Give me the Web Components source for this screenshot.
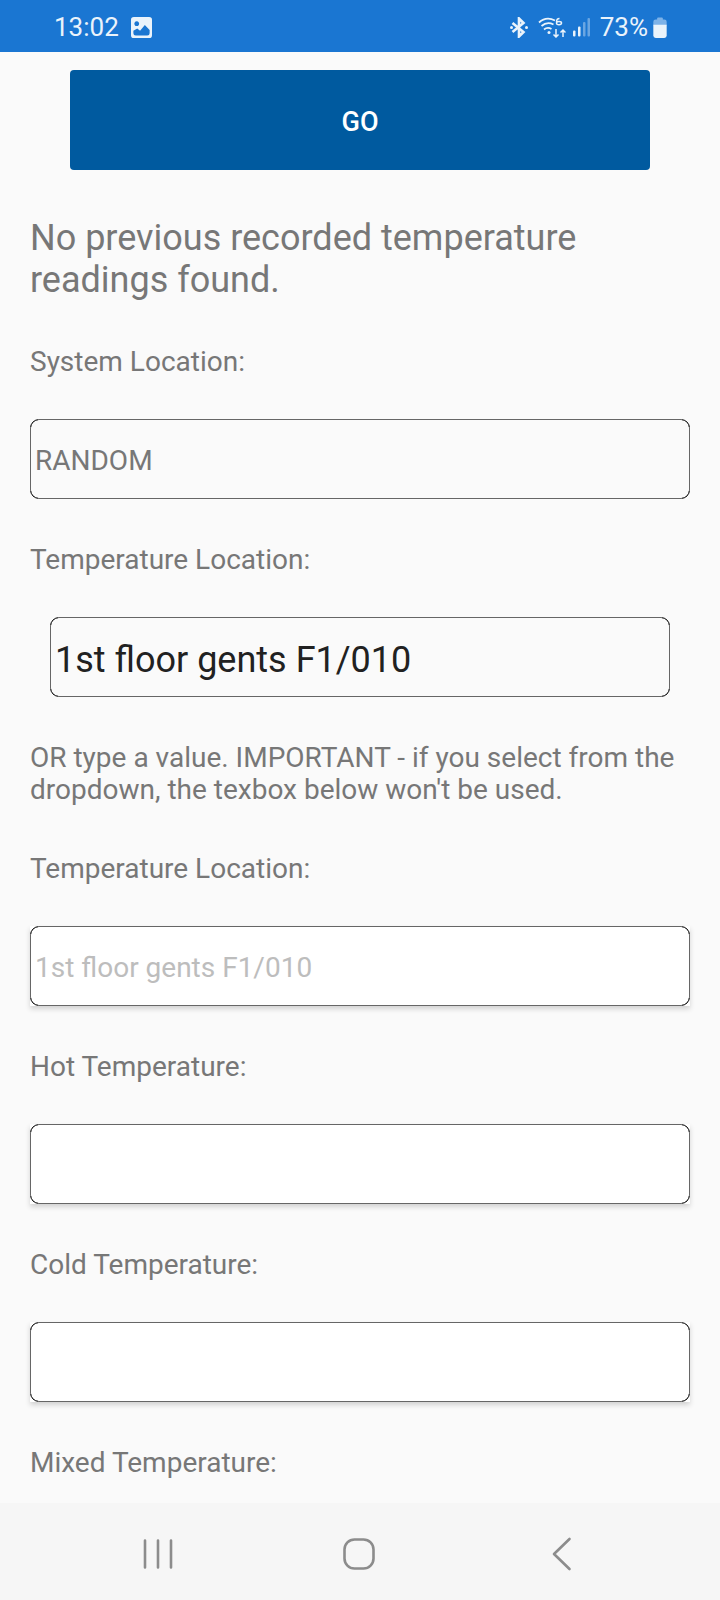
<!DOCTYPE html>
<html lang="en">
<head>
<meta charset="UTF-8">
<title>Temperature readings</title>
<style>
    html, body { margin: 0; padding: 0; }
    body {
        width: 720px;
        height: 1600px;
        overflow: hidden;
        background: #fafafa;
        font-family: Roboto, "Liberation Sans", sans-serif;
        display: flex;
        flex-direction: column;
    }
    page-content { flex: 1; min-height: 0; }
</style>
</head>
<body>
<template id="status-bar">
    <style>
        :host {
            display: flex;
            align-items: center;
            height: 52px;
            flex: none;
            padding: 0 53px 0 54px;
            background: #1a76d2;
            color: #eaf3fb;
            font-size: 26px;
            box-sizing: border-box;
        }
        .time { margin-right: 12px; position: relative; top: 1px; }
        svg { display: block; position: relative; top: 1px; }
        .grow { flex: 1; }
        .pct { margin: 0 5px 0 10px; position: relative; top: 1px; }
    </style>
    <span class="time">13:02</span>
    <svg width="21" height="21" viewBox="0 0 22 22">
        <path fill="#eaf3fb" fill-rule="evenodd" d="M3 0h16a3 3 0 0 1 3 3v16a3 3 0 0 1-3 3H3a3 3 0 0 1-3-3V3a3 3 0 0 1 3-3zM6 4.500a2.500 2.500 0 1 0 .01 0zM2.500 14.500v2.500a2.500 2.500 0 0 0 2.500 2.500h12a2.500 2.500 0 0 0 2.500-2.500v-3.500l-5-5-5 6-3-2.500z"/>
    </svg>
    <span class="grow"></span>
    <svg width="18" height="21" viewBox="0 0 18 21" fill="none" stroke="#eaf3fb" stroke-width="2.600">
        <path d="M2.500 6l11 9-4.500 4.500V1.500l4.500 4.500-11 9"/>
        <circle cx="1.500" cy="10.500" r="1.500" fill="#eaf3fb" stroke="none"/>
        <circle cx="16.500" cy="10.500" r="1.500" fill="#eaf3fb" stroke="none"/>
    </svg>
    <svg style="margin-left:10px" width="28" height="21" viewBox="0 0 28 21" fill="none" stroke="#eaf3fb" stroke-width="1.800">
        <path d="M1 5.500c5-4.500 11-4.500 16-2M3.500 9c3.500-3 8-3.500 12-1.500M6 12.500c2.500-2 5-2 7.500-.5"/>
        <circle cx="11" cy="15.500" r="1.500" fill="#eaf3fb" stroke="none"/>
        <path stroke-width="1.500" d="M18.500 5c0-2 1-3.500 3-3.500M18.500 6c0-2 5-2 5 0s-5 2.500-5 0zM18 12v8M15.500 17.500l2.500 2.500 2.500-2.500M25 20v-6.500M22.500 15.500l2.500-2.500 2.500 2.500"/>
    </svg>
    <svg style="margin-left:7px" width="17" height="20" viewBox="0 0 17 20">
        <rect x="0" y="13.500" width="2.500" height="6" rx="1" fill="#eaf3fb"/>
        <rect x="5" y="9.500" width="2.500" height="10" rx="1" fill="#eaf3fb"/>
        <rect x="10" y="5" width="2.500" height="14.500" rx="1" fill="#6aa6e2"/>
        <rect x="14.500" y="1" width="2.500" height="18.500" rx="1" fill="#6aa6e2"/>
    </svg>
    <span class="pct">73%</span>
    <svg width="14" height="21" viewBox="0 0 14 22">
        <path fill="#7db2e8" d="M4 1.500a1 1 0 0 1 1-1h4a1 1 0 0 1 1 1V2.500h1.500A2.500 2.500 0 0 1 14 5v4H0V5a2.500 2.500 0 0 1 2.500-2.500H4z"/>
        <path fill="#eaf3fb" d="M0 8h14v11.500a2.500 2.500 0 0 1-2.500 2.500h-9A2.500 2.500 0 0 1 0 19.500z"/>
    </svg>
</template>

<template id="go-button">
    <style>
        :host { display: block; padding: 18px 70px 0; }
        .btn {
            height: 100px;
            border-radius: 4px;
            background: #005a9f;
            color: #fff;
            display: flex;
            align-items: center;
            justify-content: center;
            font-size: 27px;
            font-weight: 500;
            padding-top: 3px;
            box-sizing: border-box;
        }
    </style>
    <div class="btn"><slot></slot></div>
</template>

<template id="page-content">
    <style>
        :host { display: block; overflow: hidden; }
        .message {
            margin: 47px 30px 0;
            font-size: 36px;
            line-height: 42px;
            color: #777;
        }
        .hint {
            margin: 45px 30px 0;
            font-size: 28px;
            line-height: 32px;
            color: #777;
        }
    </style>
    <go-button>GO</go-button>
    <p class="message">No previous recorded temperature readings found.</p>
    <form-field label="System Location:" style="--label-gap:46px">
        <text-box value="RANDOM"></text-box>
    </form-field>
    <form-field label="Temperature Location:">
        <text-box kind="picker" value="1st floor gents F1/010"></text-box>
    </form-field>
    <p class="hint">OR type a value. IMPORTANT - if you select from the dropdown, the texbox below won't be used.</p>
    <form-field label="Temperature Location:" style="--label-gap:48px">
        <text-box kind="entry" placeholder="1st floor gents F1/010"></text-box>
    </form-field>
    <form-field label="Hot Temperature:">
        <text-box kind="entry"></text-box>
    </form-field>
    <form-field label="Cold Temperature:">
        <text-box kind="entry"></text-box>
    </form-field>
    <form-field label="Mixed Temperature:"></form-field>
</template>

<template id="form-field">
    <style>
        :host { display: block; padding-top: var(--label-gap, 46px); }
        label {
            display: block;
            margin: 0 30px 42px;
            font-size: 28px;
            line-height: 30px;
            color: #777;
        }
    </style>
    <label></label>
    <slot></slot>
</template>

<template id="text-box">
    <style>
        :host {
            display: block;
            height: 80px;
            margin: 0 30px;
            font-size: 28px;
            color: #777;
        }
        :host([kind="picker"]) {
            margin: 0 50px;
            font-size: 36px;
            color: #212121;
        }
        :host([kind="entry"]) {
            background: #fff;
            box-shadow: 0 3px 5px rgba(0, 0, 0, .16);
        }
        .frame {
            position: relative;
            height: 100%;
            box-sizing: border-box;
            border: 1px solid #666;
            border-radius: 9px;
            padding: 3px 4px 0;
            display: flex;
            align-items: center;
        }
        :host([kind="picker"]) .frame { padding-top: 5px; }
        /* the rounded corners read darker than the straight edges */
        .frame::before {
            content: "";
            position: absolute;
            inset: -1px;
            border: 1px solid #111;
            border-radius: 9px;
            -webkit-mask:
                linear-gradient(#000, #000) 0 0 / 8px 8px no-repeat,
                linear-gradient(#000, #000) 100% 0 / 8px 8px no-repeat,
                linear-gradient(#000, #000) 0 100% / 8px 8px no-repeat,
                linear-gradient(#000, #000) 100% 100% / 8px 8px no-repeat;
        }
        .placeholder { color: #bdbdbd; }
    </style>
    <div class="frame"><span class="text"></span></div>
</template>

<template id="nav-bar">
    <style>
        :host {
            display: flex;
            flex: none;
            height: 97px;
            background: #f6f6f6;
            align-items: center;
            padding-left: 142px;
            box-sizing: border-box;
        }
        svg { display: block; position: relative; top: 2px; }
        .home { margin: 0 177px 0 169px; }
    </style>
    <svg width="32" height="32" viewBox="0 0 32 32" fill="none" stroke="#8c8c8c" stroke-width="2.600" stroke-linecap="round">
        <path d="M3 2.500v27M16 2.500v27M29 2.500v27"/>
    </svg>
    <svg class="home" width="32" height="32" viewBox="0 0 32 32" fill="none" stroke="#8c8c8c" stroke-width="2.600">
        <rect x="1.500" y="1.500" width="29" height="29" rx="10"/>
    </svg>
    <svg width="20" height="34" viewBox="0 0 20 34" fill="none" stroke="#8c8c8c" stroke-width="2.600" stroke-linecap="round" stroke-linejoin="round">
        <path d="M17.500 2L2 17l15.500 15"/>
    </svg>
</template>

<status-bar></status-bar>
<page-content></page-content>
<nav-bar></nav-bar>

<script>
    function shadowFrom(el, id) {
        const root = el.attachShadow({ mode: "open" });
        root.appendChild(document.getElementById(id).content.cloneNode(true));
        return root;
    }

    customElements.define("status-bar", class StatusBar extends HTMLElement {
        constructor() { super(); shadowFrom(this, "status-bar"); }
    });

    customElements.define("go-button", class GoButton extends HTMLElement {
        constructor() { super(); shadowFrom(this, "go-button"); }
    });

    customElements.define("form-field", class FormField extends HTMLElement {
        constructor() { super(); shadowFrom(this, "form-field"); }
        connectedCallback() {
            this.shadowRoot.querySelector("label").textContent = this.getAttribute("label");
        }
    });

    customElements.define("text-box", class TextBox extends HTMLElement {
        constructor() { super(); shadowFrom(this, "text-box"); }
        connectedCallback() {
            const text = this.shadowRoot.querySelector(".text");
            if (this.hasAttribute("placeholder")) {
                text.textContent = this.getAttribute("placeholder");
                text.className = "text placeholder";
            } else {
                text.textContent = this.getAttribute("value") || "";
            }
        }
    });

    customElements.define("nav-bar", class NavBar extends HTMLElement {
        constructor() { super(); shadowFrom(this, "nav-bar"); }
    });

    customElements.define("page-content", class PageContent extends HTMLElement {
        constructor() { super(); shadowFrom(this, "page-content"); }
    });
</script>
</body>
</html>
